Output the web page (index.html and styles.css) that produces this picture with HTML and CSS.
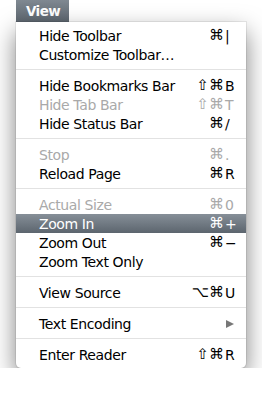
FILE: index.html
```html
<!DOCTYPE html>
<html>
<head>
<meta charset="utf-8">
<link rel="stylesheet" href="styles.css">
</head>
<body>
<div class="screen">
  <div class="title">View</div>
  <div class="menu">
    <div class="item"><span class="label">Hide Toolbar</span><span class="mods">⌘</span><span class="key">|</span></div>
    <div class="item"><span class="label">Customize Toolbar…</span><span class="mods"></span><span class="key"></span></div>
    <div class="sep"></div>
    <div class="item"><span class="label">Hide Bookmarks Bar</span><span class="mods">⇧⌘</span><span class="key">B</span></div>
    <div class="item disabled"><span class="label">Hide Tab Bar</span><span class="mods">⇧⌘</span><span class="key">T</span></div>
    <div class="item"><span class="label">Hide Status Bar</span><span class="mods">⌘</span><span class="key">/</span></div>
    <div class="sep"></div>
    <div class="item disabled"><span class="label">Stop</span><span class="mods">⌘</span><span class="key">.</span></div>
    <div class="item"><span class="label">Reload Page</span><span class="mods">⌘</span><span class="key">R</span></div>
    <div class="sep"></div>
    <div class="item disabled"><span class="label">Actual Size</span><span class="mods">⌘</span><span class="key">0</span></div>
    <div class="item active"><span class="label">Zoom In</span><span class="mods">⌘</span><span class="key">+</span></div>
    <div class="item"><span class="label">Zoom Out</span><span class="mods">⌘</span><span class="key">−</span></div>
    <div class="item"><span class="label">Zoom Text Only</span><span class="mods"></span><span class="key"></span></div>
    <div class="sep"></div>
    <div class="item"><span class="label">View Source</span><span class="mods">⌥⌘</span><span class="key">U</span></div>
    <div class="sep"></div>
    <div class="item"><span class="label">Text Encoding</span><span class="mods"></span><span class="key"><span class="arrow"></span></span></div>
    <div class="sep"></div>
    <div class="item"><span class="label">Enter Reader</span><span class="mods">⇧⌘</span><span class="key">R</span></div>
  </div>
</div>
</body>
</html>
```
FILE: styles.css
```css
html, body {
  margin: 0;
  padding: 0;
  background: #ffffff;
}

.screen {
  display: flex;
  flex-direction: column;
  align-items: flex-start;
  padding-left: 16px;
  font-family: "DejaVu Sans", "Noto Sans", sans-serif;
  font-size: 14px;
  letter-spacing: -0.4px;
  color: #000;
}

.title {
  height: 22px;
  line-height: 22px;
  padding: 0 9px 0 10px;
  background: linear-gradient(#7f8891, #5e6770);
  color: #fff;
  font-weight: bold;
  font-size: 13.5px;
  letter-spacing: -0.6px;
}

.menu {
  width: 230px;
  box-sizing: border-box;
  background: #fff;
  padding: 4px 0;
  border-radius: 0 0 5px 5px;
  box-shadow: 0 10px 24px rgba(0, 0, 0, 0.5), 0 0 0 1px rgba(0, 0, 0, 0.07);
}

.item {
  display: grid;
  grid-template-columns: 1fr auto 16px;
  align-items: center;
  height: 19px;
  padding: 0 6px 0 23px;
  white-space: nowrap;
}

.mods {
  text-align: right;
  letter-spacing: 0;
  font-size: 15px;
  line-height: 19px;
}

.key {
  padding-left: 1px;
  letter-spacing: 0;
  display: flex;
  align-items: center;
}

.disabled {
  color: #a9a9a9;
}

.active {
  background: linear-gradient(#868f98, #5c656e);
  color: #fff;
}

.sep {
  height: 12px;
  display: flex;
  flex-direction: column;
  padding-top: 5px;
  box-sizing: border-box;
}

.sep::before {
  content: "";
  height: 1px;
  background: #e2e2e2;
}

.arrow {
  width: 0;
  height: 0;
  border-left: 8px solid #777;
  border-top: 4.5px solid transparent;
  border-bottom: 4.5px solid transparent;
  margin-left: 1px;
}
```
